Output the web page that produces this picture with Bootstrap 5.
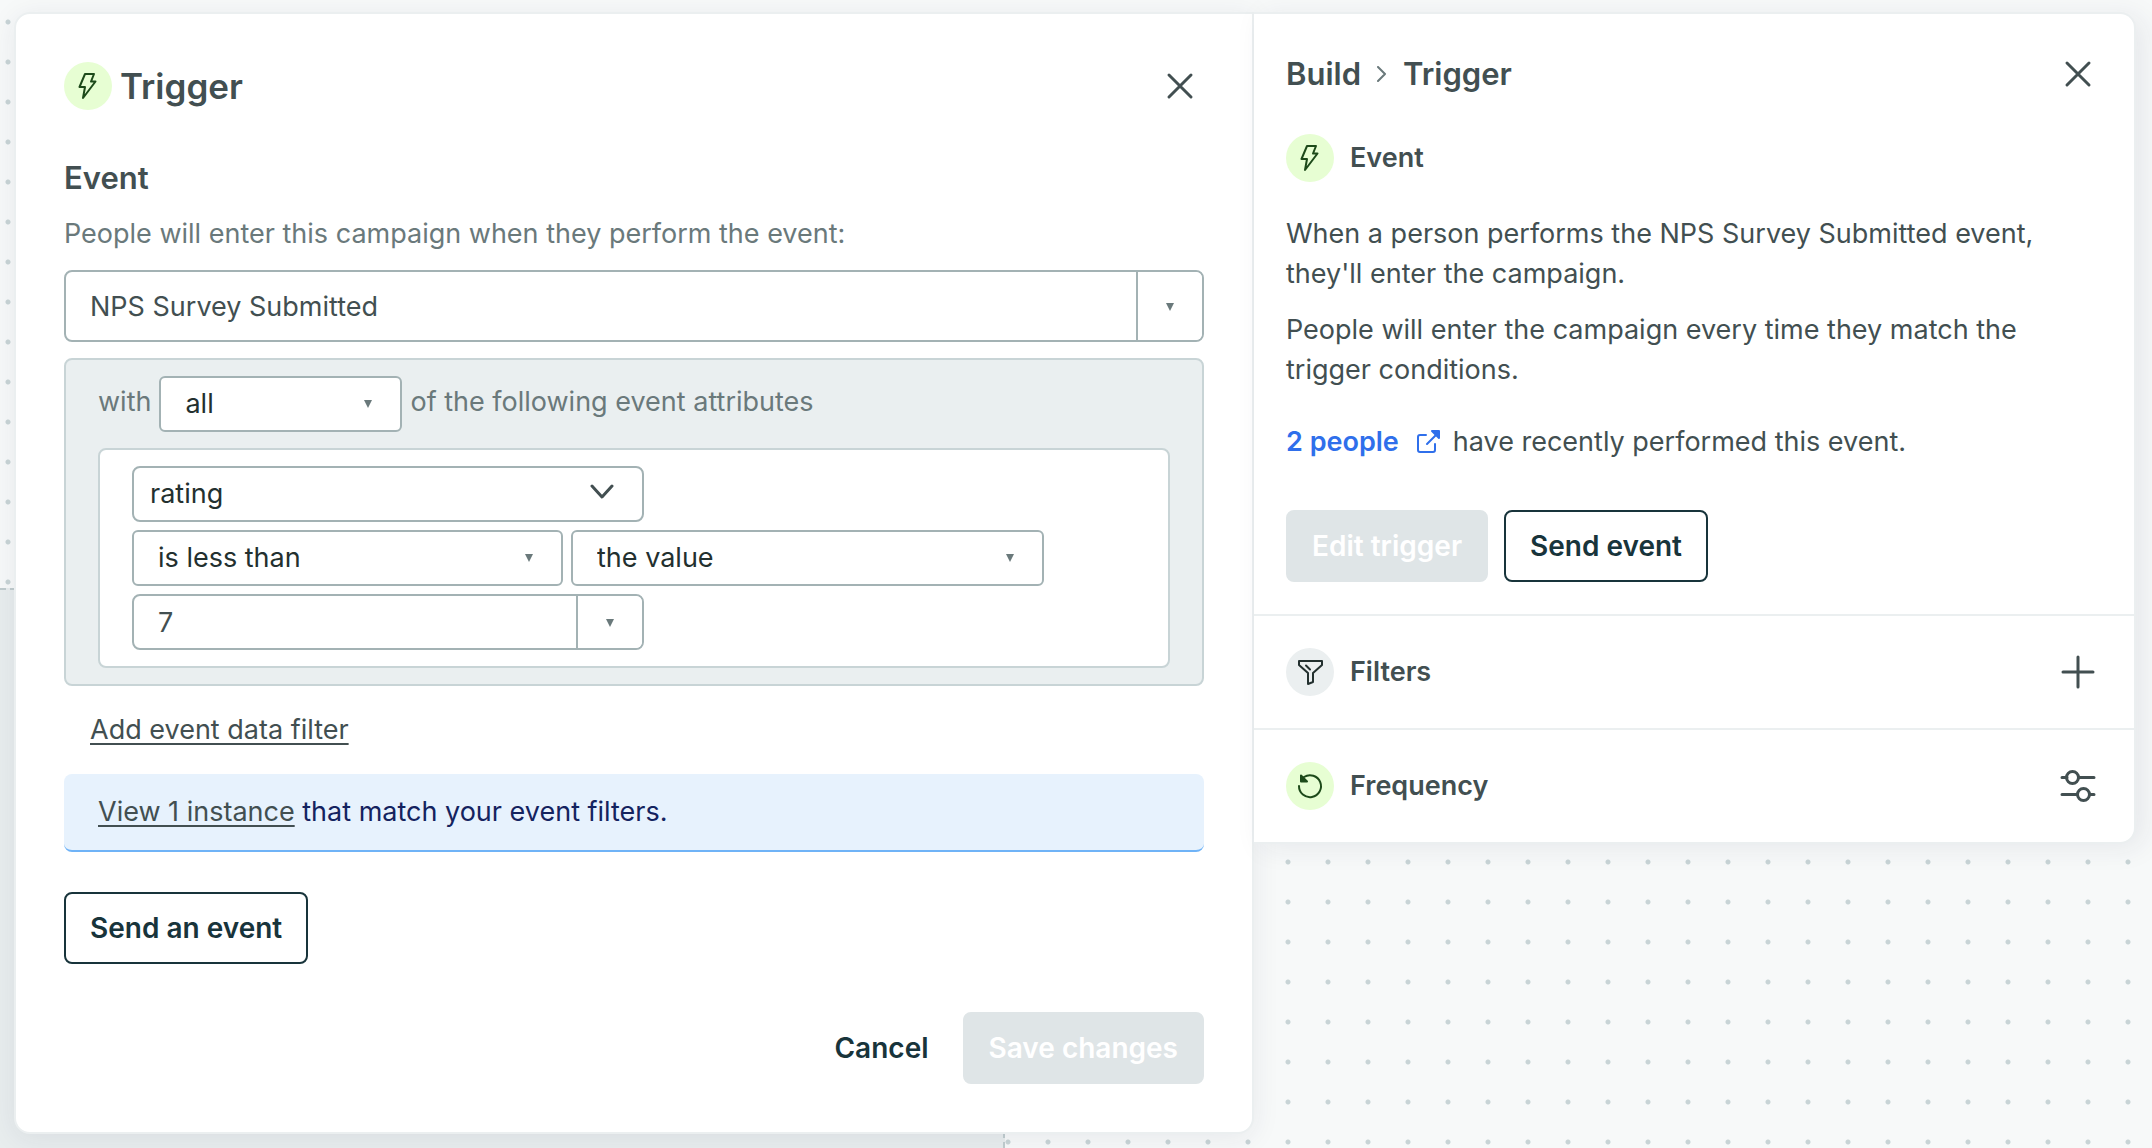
<!DOCTYPE html>
<html lang="en">
<head>
<meta charset="utf-8">
<meta name="viewport" content="width=device-width, initial-scale=1">
<title>Trigger</title>
<link href="https://cdn.jsdelivr.net/npm/bootstrap@5.3.0/dist/css/bootstrap.min.css" rel="stylesheet">
<style>
:root{--ink:#424f51;--muted-ink:#6a797b;--deep:#18343b;--field:#a3b2b4;--line:#ebeff0;--soft:#c8d4d6}
body{font-family:Inter,"Liberation Sans",sans-serif;font-size:27px;line-height:40px;color:var(--ink);background:#f7f9f9 radial-gradient(circle at 20px 20px,#c8d4d6 2px,transparent 3px) -12px 2px/40px 40px;min-height:100vh;position:relative}
/* selected area of the canvas, behind the sheets */
.zone{position:absolute;left:0;top:588px;right:53.3%;bottom:0;background:#e8edee;border:2px dashed #c0ccce;border-left:0;border-bottom:0}
.sheets{position:relative;padding:12px 16px 14px 14px}
.sheet{background:#fff;border:2px solid var(--line)}
.sheet-main{flex:0 0 1240px;border-radius:16px;border-top-right-radius:0;padding:48px;box-shadow:0 4px 28px rgba(40,40,80,.08)}
.sheet-side{flex:1 1 0;border-left:0;border-radius:0 16px 16px 0;box-shadow:8px 4px 28px rgba(40,40,80,.08)}
.sec{padding:32px}
.sec-first{padding-top:40px}
.sec + .sec{border-top:2px solid var(--line)}
h1,h2,h3,p{margin:0}
h1{font-size:35px;line-height:48px;font-weight:600}
h2{font-size:31px;line-height:40px;font-weight:600}
h3{font-size:27px;line-height:40px;font-weight:600}
.gap-t32{margin-top:32px}
.gap-t40{margin-top:40px}
.disc{width:48px;height:48px;border-radius:50%;background:#e7fed3;color:#1d4a1a;flex:none;display:flex;align-items:center;justify-content:center}
.disc-off{background:var(--line);color:#23302f}
svg{display:block;fill:none;stroke:currentColor;stroke-width:2;stroke-linecap:round;stroke-linejoin:round}
svg.bold-line{stroke-width:3}
svg .solid{fill:currentColor}
.ghost{border:0;background:none;padding:0;color:var(--ink);width:48px;height:48px;display:flex;align-items:center;justify-content:center}
.crumbs{column-gap:16px;height:40px}
.muted{color:var(--muted-ink)}
.muted label,.muted span{padding-bottom:4px}
.box{border:2px solid var(--field);border-radius:8px;background:#fff;overflow:hidden;display:flex}
.box input{border:0;flex:1;min-width:0;padding:2px 24px 0;color:var(--ink);outline:0;background:none}
.box button{width:66px;border:0;border-left:2px solid var(--field);background:#fff;padding-top:2px;display:flex;align-items:center;justify-content:center}
.caret{width:0;height:0;border:4px solid transparent;border-top:8px solid #6a797b;border-bottom:0}
.tall{height:72px}
.short{height:56px}
.pick{height:56px;border:2px solid var(--field);border-radius:6px;color:#23302f;padding:0 24px;line-height:40px;background:#fff url("data:image/svg+xml,%3Csvg xmlns='http://www.w3.org/2000/svg' width='8' height='8'%3E%3Cpath d='M0 0h8l-4 8z' fill='%236a797b'/%3E%3C/svg%3E") no-repeat right 28px center;appearance:none}
.pick-wide{border-radius:8px;padding:0 16px;background-image:url("data:image/svg+xml,%3Csvg xmlns='http://www.w3.org/2000/svg' width='24' height='16'%3E%3Cpath d='M2 2l10 11L22 2' fill='none' stroke='%23424f51' stroke-width='3' stroke-linecap='round' stroke-linejoin='round'/%3E%3C/svg%3E");background-position:right 28px top 16px}
.w-all{width:243px}.w-attr{width:512px}.w-op{width:431px}.w-kind{width:473px}
.group{border:2px solid var(--soft);border-radius:8px;background:#eaeff0;padding:16px 32px}
.inner{border:2px solid var(--soft);border-radius:8px;background:#fff;padding:16px 32px}
.ulink{color:var(--ink);text-decoration:underline;text-decoration-thickness:2px;text-underline-offset:4px;text-decoration-skip-ink:none}
.add-row{padding-left:26px}
.notice{background:#e7f2fd;border-bottom:2px solid #6fb3f7;border-radius:8px;color:#14235f;padding:18px 34px}
.act{height:72px;padding:0 24px;border-radius:8px;border:2px solid var(--deep);color:var(--deep);background:#fff;font-size:28px;font-weight:600}
.act:disabled{border-color:#dfe5e7;background:#dfe5e7;color:#fff}
.act-plain{border-color:transparent;background:none}
.people{color:#2f6feb;font-weight:600;text-decoration:none}
</style>
<script src="https://cdn.jsdelivr.net/npm/bootstrap@5.3.0/dist/js/bootstrap.bundle.min.js"></script>
</head>
<body>
<div class="zone"></div>
<div class="sheets d-flex align-items-start">
<main class="sheet sheet-main">
  <header class="d-flex align-items-center gap-2">
    <span class="disc"><svg width="28" height="28" viewBox="0 0 28 28"><path d="M11 2h9l-3 7.500h4.500L9 26l2-11H5.500z"/></svg></span>
    <h1>Trigger</h1>
    <button class="ghost ms-auto" aria-label="Close"><svg class="bold-line" width="32" height="32" viewBox="0 0 32 32"><path d="M5 5l22 22M27 5L5 27"/></svg></button>
  </header>
  <h2 class="mt-5">Event</h2>
  <p class="mt-3"><label class="muted" for="event">People will enter this campaign when they perform the event:</label></p>
  <div class="box tall mt-3"><input id="event" value="NPS Survey Submitted"><button aria-label="Choose event"><span class="caret"></span></button></div>
  <section class="group mt-3">
    <div class="d-flex align-items-center gap-2 muted"><label for="all">with</label><select id="all" class="pick w-all"><option>all</option></select><span>of the following event attributes</span></div>
    <div class="inner mt-3 d-flex flex-column gap-2">
      <select class="pick pick-wide w-attr" aria-label="Attribute"><option>rating</option></select>
      <div class="d-flex gap-2"><select class="pick w-op" aria-label="Operator"><option>is less than</option></select><select class="pick w-kind" aria-label="Kind"><option>the value</option></select></div>
      <div class="box short w-attr"><input value="7" aria-label="Value"><button aria-label="Choose value"><span class="caret"></span></button></div>
    </div>
  </section>
  <p class="mt-4 add-row"><a class="ulink" href="#">Add event data filter</a></p>
  <div class="notice mt-4"><a class="ulink" href="#">View 1 instance</a> that match your event filters.</div>
  <div class="gap-t40 d-flex"><button class="act">Send an event</button></div>
  <footer class="d-flex justify-content-end gap-2 mt-5"><button class="act act-plain">Cancel</button><button class="act" disabled>Save changes</button></footer>
</main>
<aside class="sheet sheet-side">
  <section class="sec sec-first">
    <header class="crumbs d-flex align-items-center">
      <h2>Build</h2>
      <svg width="10" height="16" viewBox="0 0 10 16" class="muted"><path d="M1 1l7 7-7 7"/></svg>
      <h2>Trigger</h2>
      <button class="ghost ms-auto" aria-label="Close"><svg class="bold-line" width="32" height="32" viewBox="0 0 32 32"><path d="M5 5l22 22M27 5L5 27"/></svg></button>
    </header>
    <div class="d-flex align-items-center gap-3 gap-t40">
      <span class="disc"><svg width="28" height="28" viewBox="0 0 28 28"><path d="M11 2h9l-3 7.500h4.500L9 26l2-11H5.500z"/></svg></span>
      <h3>Event</h3>
    </div>
    <p class="gap-t32">When a person performs the NPS Survey Submitted event, they'll enter the campaign.</p>
    <p class="mt-3">People will enter the campaign every time they match the trigger conditions.</p>
    <p class="gap-t32 d-flex align-items-center"><a class="people d-flex align-items-center gap-3" href="#">2 people <svg width="26" height="26" viewBox="0 0 26 26"><path d="M11 6H5a2 2 0 0 0-2 2v13a2 2 0 0 0 2 2h13a2 2 0 0 0 2-2v-6M12 15l9-9"/><path class="solid" d="M17 2h7v7z"/></svg></a><span class="ps-2 ms-1">have recently performed this event.</span></p>
    <div class="d-flex gap-3 mt-5"><button class="act" disabled>Edit trigger</button><button class="act">Send event</button></div>
  </section>
  <section class="sec d-flex align-items-center gap-3">
    <span class="disc disc-off"><svg width="28" height="28" viewBox="0 0 28 28"><path d="M3 3h23v4l-9 8v9l-5 2V15L3 7zM10 7.500l4 4"/></svg></span>
    <h3>Filters</h3>
    <button class="ghost ms-auto" aria-label="Add filter"><svg class="bold-line" width="36" height="36" viewBox="0 0 36 36"><path d="M18 3v30M3 18h30"/></svg></button>
  </section>
  <section class="sec d-flex align-items-center gap-3">
    <span class="disc"><svg width="28" height="28" viewBox="0 0 28 28"><path d="M3 14A11 11 0 1 0 8 5"/><path class="solid" d="M5 3.500v6h6z"/></svg></span>
    <h3>Frequency</h3>
    <button class="ghost ms-auto" aria-label="Frequency settings"><svg class="bold-line" width="40" height="36" viewBox="0 0 40 36"><path d="M4 9.500h5M21 9.500h15M4 26.500h15M32 26.500h4"/><circle cx="14.500" cy="9.500" r="6"/><circle cx="25.500" cy="26.500" r="6"/></svg></button>
  </section>
</aside>
</div>
</body>
</html>
